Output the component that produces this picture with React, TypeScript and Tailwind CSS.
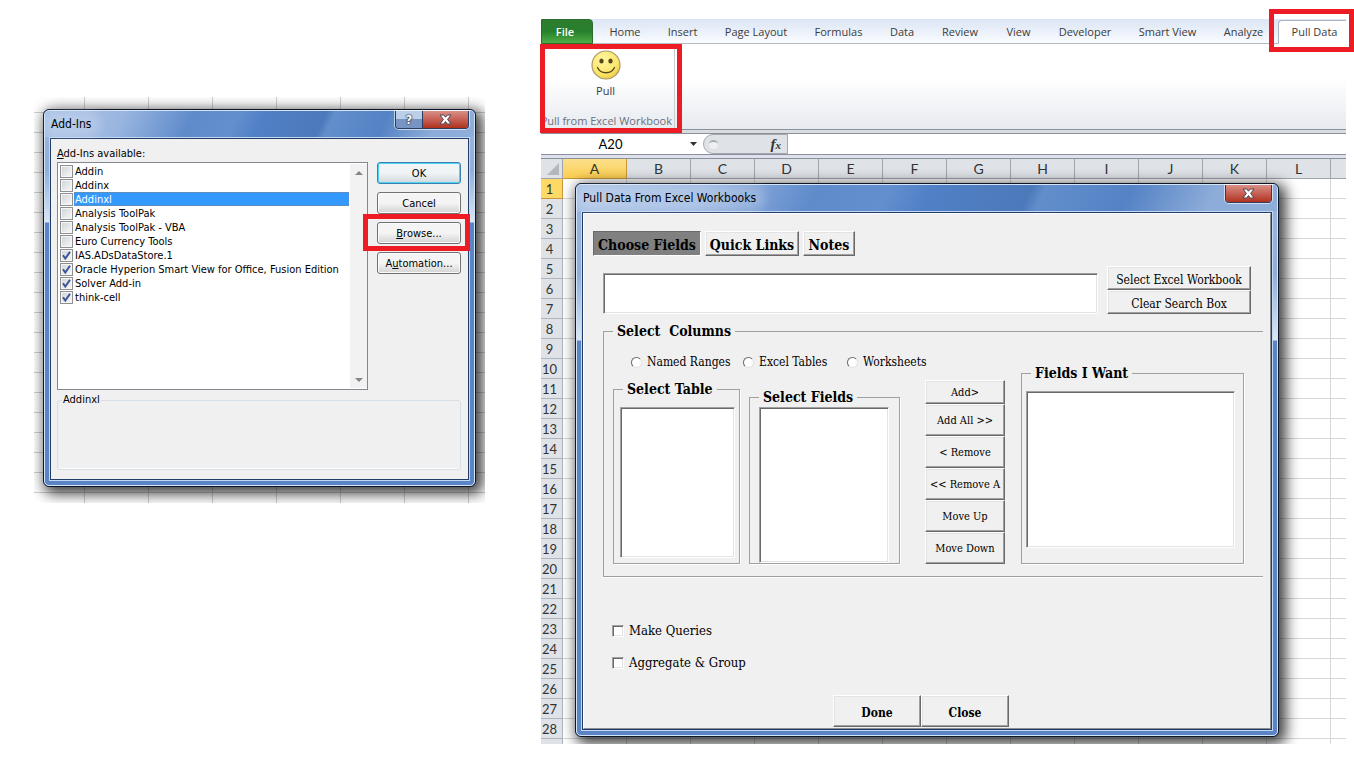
import { useState, type ReactNode } from "react";

const addIns = [
  { name: "Addin", on: false },
  { name: "Addinx", on: false },
  { name: "Addinxl", on: false },
  { name: "Analysis ToolPak", on: false },
  { name: "Analysis ToolPak - VBA", on: false },
  { name: "Euro Currency Tools", on: false },
  { name: "IAS.ADsDataStore.1", on: true },
  { name: "Oracle Hyperion Smart View for Office, Fusion Edition", on: true },
  { name: "Solver Add-in", on: true },
  { name: "think-cell", on: true },
];

const ribbonTabs = [
  { label: "Home", width: "w-[58px]" },
  { label: "Insert", width: "w-[57px]" },
  { label: "Page Layout", width: "w-[90px]" },
  { label: "Formulas", width: "w-[75px]" },
  { label: "Data", width: "w-[52px]" },
  { label: "Review", width: "w-16" },
  { label: "View", width: "w-[53px]" },
  { label: "Developer", width: "w-20" },
  { label: "Smart View", width: "w-[85px]" },
  { label: "Analyze", width: "w-[67px]" },
];

const columns = ["A", "B", "C", "D", "E", "F", "G", "H", "I", "J", "K", "L", ""];
const rows = Array.from({ length: 28 }, (_, i) => i + 1);

const raised =
  "border border-t-white border-l-white border-r-[#696969] border-b-[#696969] bg-[#f0f0f0] pt-[3px] shadow-[inset_-1px_-1px_0_#a0a0a0,inset_1px_1px_0_#e3e3e3] flex items-center justify-center whitespace-nowrap";
const sunken =
  "appearance-none rounded-none border border-t-[#a0a0a0] border-l-[#a0a0a0] border-r-white border-b-white bg-white shadow-[inset_1px_1px_0_#696969,inset_-1px_-1px_0_#e3e3e3] outline-none";
const aeroButton =
  "flex h-[22px] w-full items-center justify-center rounded-[3px] border border-[#707070] bg-linear-to-b from-[#f4f4f4] from-50% to-[#d3d3d3] to-100% pt-0.5 shadow-[inset_0_0_0_1px_#fbfbfb]";

function CloseGlyph() {
  return (
    <svg width="13" height="11" viewBox="0 0 13 11">
      <path
        d="M1 1h3.6l1.9 2.2L8.400 1H12L8.600 5.400 12 10H8.400L6.500 7.600 4.600 10H1l3.400-4.600z"
        fill="#fff"
        stroke="#4a4656"
        strokeWidth="1"
      />
    </svg>
  );
}

type WindowProps = { title: string; help?: boolean; frame: string; children: ReactNode };

function AeroWindow({ title, help, frame, children }: WindowProps) {
  return (
    <section className="rounded-md border border-[#0d1526] bg-[#5b84c4] shadow-[4px_4px_14px_3px_rgba(0,0,0,0.75)]">
      <div className={`rounded-[5px] border border-[#d5e5f8] px-1 pb-1 ${frame}`}>
        <header className="-mx-1 flex h-[26px] items-start justify-between rounded-t-[4px] bg-[linear-gradient(115deg,#a9c2e6_0%,#9ab6e0_18%,#5f8bcb_34%,#638fce_44%,#5080c6_50%,#4c79b9_64%,#628ecc_66%,#5482c4_78%,#8dacd9_90%,#8eadd9_100%)] pl-1.5 pr-[5px]">
          <h2 className="self-center rounded-full bg-white/20 pr-1 text-[12px] leading-4 text-black shadow-[0_0_10px_6px_rgba(255,255,255,0.2)]">
            {title}
          </h2>
          <div className="flex h-[18px] overflow-hidden rounded-b-[4px] border border-t-0 border-[#2b3d61] shadow-[0_0_0_1px_rgba(255,255,255,0.6)]">
            {help && (
              <button
                aria-label="Help"
                className="flex w-[27px] items-center justify-center border-r border-[#2b3d61] bg-linear-to-b from-[#bccfe9] from-45% to-[#7794c2] to-50% text-[13px] font-bold text-white [text-shadow:0_0_2px_#000,0_0_1px_#000]"
              >
                ?
              </button>
            )}
            <button
              aria-label="Close"
              className="flex w-[45px] items-center justify-center bg-linear-to-b from-[#d99086] via-[#c8645a] via-45% to-[#b0301c]"
            >
              <CloseGlyph />
            </button>
          </div>
        </header>
        <div className="border border-[#c3d8f2]">
          <div className="border border-[#223c68] bg-[#f0f0f0]">{children}</div>
        </div>
      </div>
    </section>
  );
}

function AddInRow({ name, on, selected }: { name: string; on: boolean; selected: boolean }) {
  const [checked, setChecked] = useState(on);
  return (
    <li>
      <label className="flex h-3.5 items-center">
        <span className="relative flex size-[13px]">
          <input
            type="checkbox"
            checked={checked}
            onChange={() => setChecked(!checked)}
            className="size-[13px] appearance-none border border-[#8e8f8f] bg-linear-to-br from-[#cfd3d8] to-[#f8f8f8] shadow-[inset_0_0_0_1px_#f6f6f6]"
          />
          {checked && (
            <svg className="pointer-events-none absolute inset-0" width="13" height="13" viewBox="0 0 13 13">
              <path d="M3 6.200l2.300 3.300L10 2.800" fill="none" stroke="#3c5599" strokeWidth="2" />
            </svg>
          )}
        </span>
        <span
          className={
            selected
              ? "ml-px h-3.5 flex-1 bg-[#3399ff] pt-px pl-px leading-[14px] text-white outline-1 -outline-offset-1 outline-dotted outline-[#5f8fc0]"
              : "ml-px h-3.5 flex-1 pt-px pl-px leading-[14px]"
          }
        >
          {name}
        </span>
      </label>
    </li>
  );
}

function AddInsDialog() {
  return (
    <AeroWindow
      title="Add-Ins"
      help
      frame="bg-[linear-gradient(to_bottom,#9bb7df_0px,#8fafdb_60px,#dbe6f4_111px,#5b84c4_112px)]"
    >
      <div className="pt-1.5 pr-[7px] pb-[9px] pl-1.5">
        <p className="leading-[17px]">
          <u>A</u>dd-Ins available:
        </p>
        <div className="flex gap-[9px]">
          <div className="flex h-[228px] flex-1 border border-[#828790] bg-white">
            <ul className="flex-1 pt-px pl-0.5">
              {addIns.map((item) => (
                <AddInRow key={item.name} name={item.name} on={item.on} selected={item.name === "Addinxl"} />
              ))}
            </ul>
            <div className="my-px ml-px flex w-[17px] flex-col justify-between bg-[#f2f2f2]">
              <button aria-label="Scroll up" className="flex h-[17px] items-center justify-center">
                <svg width="8" height="4" viewBox="0 0 8 4">
                  <path d="M0 4L4 0l4 4z" fill="#858585" />
                </svg>
              </button>
              <button aria-label="Scroll down" className="flex h-[17px] items-center justify-center">
                <svg width="8" height="4" viewBox="0 0 8 4">
                  <path d="M0 0h8L4 4z" fill="#858585" />
                </svg>
              </button>
            </div>
          </div>
          <div className="flex w-[84px] flex-col gap-2">
            <button className="flex h-[22px] w-full items-center justify-center rounded-[3px] border border-[#3c7fb1] bg-linear-to-b from-[#f1f4f6] from-50% to-[#d0d8dc] pt-0.5 shadow-[inset_0_0_0_1px_#4fd3f5]">
              OK
            </button>
            <button className={aeroButton}>Cancel</button>
            <div className="relative">
              <button className={aeroButton}>
                <span>
                  <u>B</u>rowse...
                </span>
              </button>
              <div className="pointer-events-none absolute -top-2 -right-[9px] -left-3.5 h-[37px] border-5 border-[#ed1c24]" />
            </div>
            <button className={aeroButton}>
              <span>
                A<u>u</u>tomation...
              </span>
            </button>
          </div>
        </div>
        <fieldset className="mt-[3px] h-[77px] rounded-[3px] border border-[#d5dfe5] pl-1 shadow-[inset_0_-1px_0_#fff]">
          <legend className="px-px leading-[14px]">Addinxl</legend>
        </fieldset>
      </div>
    </AeroWindow>
  );
}

function RadioOption({ label, className }: { label: string; className: string }) {
  return (
    <label className={`flex items-center gap-[5px] text-[12px] ${className}`}>
      <input
        type="radio"
        name="source"
        className="size-[11px] appearance-none rounded-full border border-t-[#696969] border-l-[#696969] border-r-[#e3e3e3] border-b-[#e3e3e3] bg-white checked:bg-[radial-gradient(#000_2px,#fff_3px)]"
      />
      {label}
    </label>
  );
}

function CheckOption({ label }: { label: string }) {
  return (
    <label className="flex h-4 items-center gap-[5px] text-[13px]">
      <input type="checkbox" className={`size-3 checked:bg-[#333] ${sunken}`} />
      {label}
    </label>
  );
}

type FieldGroupProps = { title: string; className: string; boxClass: string };

function FieldGroup({ title, className, boxClass }: FieldGroupProps) {
  return (
    <fieldset className={`border border-[#a0a0a0] shadow-[1px_1px_0_#fff] ${className}`}>
      <legend className="ml-[9px] px-1 text-[14px] leading-4 font-bold">{title}</legend>
      <select multiple aria-label={title} className={`block overflow-hidden ${sunken} ${boxClass}`} />
    </fieldset>
  );
}

function PullDataDialog() {
  const moves = ["Add All >>", "< Remove", "<< Remove A", "Move Up", "Move Down"];
  return (
    <AeroWindow
      title="Pull Data From Excel Workbooks"
      frame="bg-[linear-gradient(to_bottom,#9bb7df_0px,#8fafdb_90px,#dbe6f4_155px,#5b84c4_156px)]"
    >
      <div className="border border-t-white border-l-white border-r-[#8c8f95] border-b-[#8c8f95] pt-[17px] pl-[9px] font-['DejaVu_Serif_Condensed','DejaVu_Serif',serif] text-black">
        <nav className="flex gap-1 text-[14px] font-bold">
          <button className="flex h-[25px] w-[108px] items-center justify-center border border-t-[#696969] border-l-[#696969] border-r-white border-b-white bg-[#808080] pt-1 whitespace-nowrap">
            Choose Fields
          </button>
          <button className={`h-[25px] w-[94px] ${raised}`}>Quick Links</button>
          <button className={`h-[25px] w-[52px] ${raised}`}>Notes</button>
        </nav>

        <div className="mt-2.5 flex items-end gap-[9px] pr-[19px] pl-2.5">
          <input aria-label="Workbook search" className={`h-[41px] min-w-0 flex-1 px-1 ${sunken}`} />
          <div className="w-36 text-[12px]">
            <button className={`h-6 w-full ${raised}`}>Select Excel Workbook</button>
            <button className={`h-6 w-full ${raised}`}>Clear Search Box</button>
          </div>
        </div>

        <fieldset className="mt-[9px] mr-[7px] ml-2.5 border border-r-0 border-[#a0a0a0] pb-3 pl-[9px] shadow-[0_1px_0_#fff]">
          <legend className="px-1 text-[14px] leading-4 font-bold whitespace-pre">Select  Columns</legend>
          <div className="flex items-end">
            <div className="pt-[15px]">
              <div className="mb-2.5 flex h-4 items-center pl-[18px]">
                <RadioOption label="Named Ranges" className="w-28" />
                <RadioOption label="Excel Tables" className="w-[104px]" />
                <RadioOption label="Worksheets" className="w-24" />
              </div>
              <div className="flex items-end">
                <FieldGroup title="Select Table" className="h-[183px] w-[127px]" boxClass="mt-2.5 ml-1.5 h-[151px] w-[115px]" />
                <FieldGroup title="Select Fields" className="ml-[9px] h-[175px] w-[151px]" boxClass="mt-0.5 ml-[9px] h-[156px] w-[130px]" />
                <div className="ml-[25px] w-20 text-[11px]">
                  <button className={`h-6 w-full ${raised}`}>Add&gt;</button>
                  {moves.map((label) => (
                    <button key={label} className={`h-8 w-full ${raised}`}>
                      {label}
                    </button>
                  ))}
                </div>
              </div>
            </div>
            <FieldGroup title="Fields I Want" className="ml-4 h-[199px] w-[223px]" boxClass="mt-2.5 ml-1 h-[157px] w-[209px]" />
          </div>
        </fieldset>

        <div className="mt-[46px] space-y-4 pl-[19px]">
          <CheckOption label="Make Queries" />
          <CheckOption label="Aggregate & Group" />
        </div>

        <div className="mt-6 flex pb-px pl-60 text-[12px] font-bold">
          <button className={`h-8 w-[88px] ${raised}`}>Done</button>
          <button className={`h-8 w-[88px] ${raised}`}>Close</button>
        </div>
      </div>
    </AeroWindow>
  );
}

function Smiley() {
  return (
    <svg width="30" height="30" viewBox="0 0 30 30">
      <defs>
        <radialGradient id="face" cx="0.4" cy="0.3" r="0.75">
          <stop offset="0" stopColor="#fff6a0" />
          <stop offset="0.7" stopColor="#fbe56a" />
          <stop offset="1" stopColor="#e9c840" />
        </radialGradient>
      </defs>
      <circle cx="15" cy="15" r="14" fill="url(#face)" stroke="#a8986a" strokeWidth="1.200" />
      <ellipse cx="10.500" cy="11" rx="2.200" ry="2.500" fill="#57461c" />
      <ellipse cx="19.500" cy="11" rx="2.200" ry="2.500" fill="#57461c" />
      <path d="M6.500 17.500c3 7 14 7 17 0" fill="none" stroke="#57461c" strokeWidth="1.300" strokeLinecap="round" />
    </svg>
  );
}

function Ribbon() {
  return (
    <div className="font-['Open_Sans','Noto_Sans',sans-serif] text-[11px] text-[#3b3b3b]">
      <nav className="flex h-[25px] border-b border-[#b6babf] bg-linear-to-b from-[#dbe5f4] to-[#fafcff]">
        <button className="-mb-px w-[52px] rounded-tr-[4px] border border-[#2d6b2c] bg-linear-to-b from-[#2d7d2f] via-[#27802c] to-[#4fae45] pt-0.5 pr-1 font-semibold text-white">
          File
        </button>
        <div className="flex pl-[3px]">
          {ribbonTabs.map((tab) => (
            <button key={tab.label} className={`pt-0.5 whitespace-nowrap ${tab.width}`}>
              {tab.label}
            </button>
          ))}
        </div>
        <div className="relative -mb-px ml-px flex-1">
          <button className="mt-px h-6 w-full rounded-tl-[4px] border-t border-l border-[#a9b3c2] bg-white pl-1 whitespace-nowrap">
            Pull Data
          </button>
          <div className="pointer-events-none absolute -top-2.5 -right-2 -left-[9px] h-[43px] border-5 border-[#ed1c24]" />
        </div>
      </nav>
      <div className="flex bg-linear-to-b from-white from-40% to-[#e7eaef]">
        <div className="relative flex h-[85px] w-[134px] flex-col items-center border-r border-[#c9ced6] pt-1.5">
          <button className="flex flex-col items-center pr-1">
            <Smiley />
            <span className="mt-0.5 leading-[18px]">Pull</span>
          </button>
          <p className="mt-auto flex w-full justify-end overflow-hidden pr-0.5 leading-4 whitespace-nowrap text-[#6a7080]">
            Pull from Excel Workbook
          </p>
          <div className="pointer-events-none absolute top-0 -left-px h-[89px] w-[142px] border-5 border-[#ed1c24]" />
        </div>
      </div>
      <div className="h-[5px] border-y border-[#8a919b] bg-[#d9dce1]" />
    </div>
  );
}

function FormulaBar() {
  return (
    <div className="flex h-5 bg-white font-[Lato,sans-serif]">
      <div className="flex w-[162px] items-center">
        <input
          aria-label="Name box"
          defaultValue="A20"
          className="w-[139px] bg-transparent pt-0.5 text-center text-[13px] text-black outline-none"
        />
        <button aria-label="Open name list" className="pl-2.5">
          <svg width="7" height="4" viewBox="0 0 7 4">
            <path d="M0 0h7L3.500 4z" fill="#333" />
          </svg>
        </button>
      </div>
      <div className="flex w-[85px] items-center justify-between rounded-l-full border border-[#a4a8ae] bg-[#dfe3e8] pr-1.5 pl-[5px]">
        <span className="size-[9px] rounded-full border-t-2 border-[#a9adb3] bg-[#eef0f2]" />
        <button className="font-['Liberation_Serif',serif] text-[15px] leading-4 font-bold text-[#333] italic">
          f<span className="text-[11px]">x</span>
        </button>
      </div>
      <input aria-label="Formula" className="min-w-0 flex-1 px-1 outline-none" />
    </div>
  );
}

function Worksheet() {
  return (
    <table className="w-full table-fixed border-separate border-spacing-0 font-[Lato,sans-serif] text-[14px] text-[#333]">
      <thead>
        <tr>
          <th className="h-5 w-[22px] border-r border-b border-[#9fa5ae] bg-[#dfe3e8] p-0">
            <svg className="ml-1.5" width="12" height="12" viewBox="0 0 12 12">
              <path d="M12 0v12H0z" fill="#b4b8be" />
            </svg>
          </th>
          {columns.map((col, i) => (
            <th
              key={i}
              className={
                col === "A"
                  ? "h-5 w-16 border-r border-b border-[#c9963a] bg-linear-to-b from-[#fbe08a] to-[#fdcf4e] p-0 leading-4 font-normal"
                  : col
                    ? "h-5 w-16 border-r border-b border-[#9fa5ae] bg-[#dfe3e8] p-0 leading-4 font-normal"
                    : "h-5 border-b border-[#9fa5ae] bg-[#dfe3e8] p-0"
              }
            >
              {col}
            </th>
          ))}
        </tr>
      </thead>
      <tbody className="text-[13px]">
        {rows.map((row) => (
          <tr key={row}>
            <th
              className={
                row === 1
                  ? "h-5 border-r border-b border-[#c9963a] bg-[#ffd966] p-0 pr-1 leading-4 font-normal"
                  : "h-5 border-r border-b border-[#b0b5bd] bg-[#dfe3e8] p-0 pr-1 leading-4 font-normal"
              }
            >
              {row}
            </th>
            {columns.map((col, i) => (
              <td key={i} className={col ? "border-r border-b border-[#d6d7d9] p-0" : "border-b border-[#d6d7d9] p-0"} />
            ))}
          </tr>
        ))}
        <tr>
          <th className="h-[5px] border-r border-[#b0b5bd] bg-[#dfe3e8] p-0" />
          {columns.map((col, i) => (
            <td key={i} className={col ? "border-r border-[#d6d7d9] p-0" : "p-0"} />
          ))}
        </tr>
      </tbody>
    </table>
  );
}

export default function App() {
  return (
    <main className="flex min-h-screen items-start bg-white pr-2 pl-[34px] font-['DejaVu_Sans_Condensed','DejaVu_Sans',sans-serif] text-[11px] text-black">
      <div className="mt-[97px] w-[451px] shrink-0 overflow-hidden bg-[linear-gradient(to_right,#cfcfcf_1px,transparent_1px),linear-gradient(to_bottom,#cfcfcf_1px,transparent_1px)] bg-size-[64px_20px] bg-position-[50px_15px] pt-3 pr-[9px] pb-4 pl-[9px]">
        <AddInsDialog />
      </div>

      <div className="mt-[19px] ml-14 min-w-0 flex-1">
        <Ribbon />
        <FormulaBar />
        <div className="h-[5px] border-y border-[#8a919b] bg-[#dfe2ee]" />
        <div className="relative overflow-hidden">
          <Worksheet />
          <div className="absolute top-6 left-[34px] w-[704px]">
            <PullDataDialog />
          </div>
        </div>
      </div>
    </main>
  );
}
